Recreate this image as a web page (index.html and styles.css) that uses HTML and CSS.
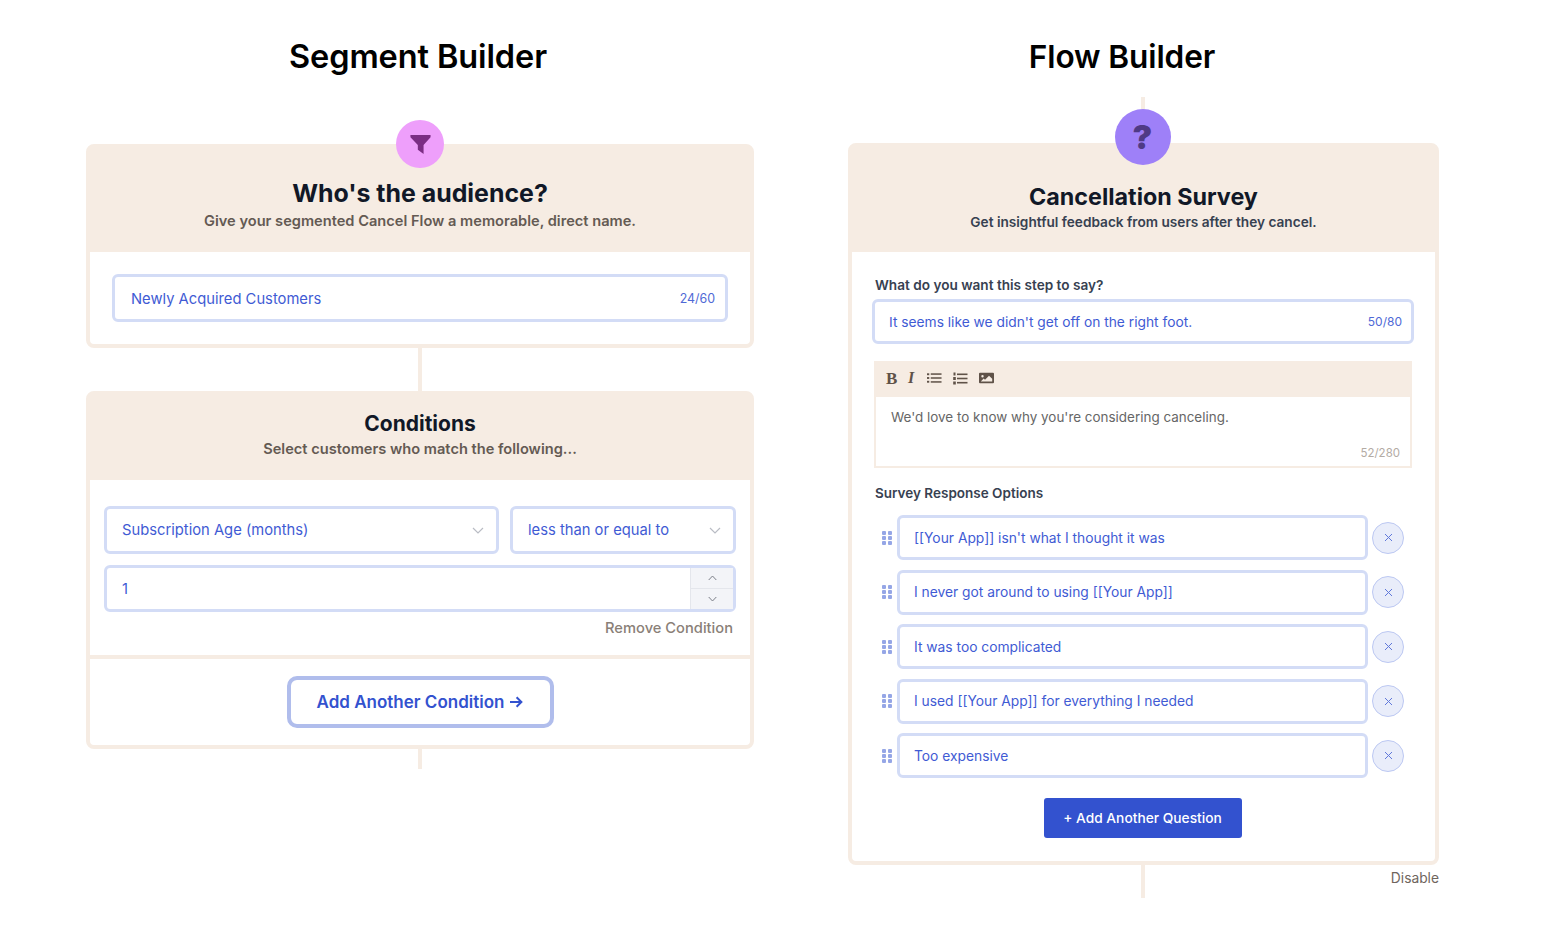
FILE: index.html
```html
<!DOCTYPE html>
<html lang="en">
<head>
<meta charset="utf-8">
<title>Builders</title>
<link rel="stylesheet" href="styles.css">
</head>
<body>
<main class="page">
  <section class="col col-left">
    <h1 class="page-title title-left">Segment Builder</h1>
    <div class="card card-audience">
      <div class="badge badge-pink">
        <svg width="23" height="23" viewBox="0 0 24 24"><path d="M1.500 2h21v2.500L15.200 12.600V22l-6-4.600v-4.800L1.500 4.500z" fill="#7b2d84"/></svg>
      </div>
      <header class="card-head head-audience">
        <h2 class="head-xl">Who's the audience?</h2>
        <p class="sub sub-brown">Give your segmented Cancel Flow a memorable, direct name.</p>
      </header>
      <div class="audience-body">
        <div class="field field-name"><span>Newly Acquired Customers</span><small class="count">24/60</small></div>
      </div>
    </div>
    <div class="line line-mid"></div>
    <div class="card">
      <header class="card-head head-conditions">
        <h2 class="head-md">Conditions</h2>
        <p class="sub sub-brown">Select customers who match the following...</p>
      </header>
      <div class="conditions-body">
        <div class="select-row">
          <div class="field field-select grow"><span>Subscription Age (months)</span>
            <svg class="chev" width="12" height="7" viewBox="0 0 12 7"><path d="M1 1l5 5 5-5" fill="none" stroke="#b9bcc4" stroke-width="1.200"/></svg></div>
          <div class="field field-select op"><span>less than or equal to</span>
            <svg class="chev" width="12" height="7" viewBox="0 0 12 7"><path d="M1 1l5 5 5-5" fill="none" stroke="#b9bcc4" stroke-width="1.200"/></svg></div>
        </div>
        <div class="field field-number"><span class="num">1</span>
          <div class="stepper">
            <div class="step"><svg width="9" height="6" viewBox="0 0 9 6"><path d="M.7 5L4.500 1l3.800 4" fill="none" stroke="#7b7f88" stroke-width="1"/></svg></div>
            <div class="step step-down"><svg width="9" height="6" viewBox="0 0 9 6"><path d="M.7 1l3.800 4 3.800-4" fill="none" stroke="#7b7f88" stroke-width="1"/></svg></div>
          </div>
        </div>
        <div class="remove">Remove Condition</div>
      </div>
      <div class="add-wrap">
        <button class="btn-outline">Add Another Condition <svg width="14" height="12" viewBox="0 0 14 12"><path d="M1 6h11.200M7.600 1.200L12.400 6l-4.800 4.800" fill="none" stroke="#3352cf" stroke-width="2"/></svg></button>
      </div>
    </div>
    <div class="line line-end"></div>
  </section>

  <section class="col col-right">
    <h1 class="page-title title-right">Flow Builder</h1>
    <div class="line line-top"></div>
    <div class="card card-survey">
      <div class="badge badge-purple">?</div>
      <header class="card-head head-survey">
        <h2 class="head-lg">Cancellation Survey</h2>
        <p class="sub sub-dark">Get insightful feedback from users after they cancel.</p>
      </header>
      <div class="survey-body">
        <label class="label label-step">What do you want this step to say?</label>
        <div class="field field-step"><span>It seems like we didn't get off on the right foot.</span><small class="count">50/80</small></div>
        <div class="editor">
          <div class="toolbar">
            <b class="tool-b">B</b>
            <i class="tool-i">I</i>
            <svg width="15" height="12" viewBox="0 0 16 12"><g fill="#5f5248"><rect x="0" y="1" width="2.400" height="2"/><rect x="0" y="5" width="2.400" height="2"/><rect x="0" y="9" width="2.400" height="2"/><rect x="4" y="1" width="11.500" height="1.600"/><rect x="4" y="5.200" width="11.500" height="1.600"/><rect x="4" y="9.400" width="11.500" height="1.600"/></g></svg>
            <svg width="15" height="13" viewBox="0 0 15 13"><g fill="#5f5248"><rect x=".5" y=".5" width="2" height="3"/><rect x=".2" y="5" width="2.600" height="3"/><rect x=".2" y="9.500" width="2.600" height="3"/><rect x="4" y="1.500" width="10.500" height="1.600"/><rect x="4" y="5.700" width="10.500" height="1.600"/><rect x="4" y="9.900" width="10.500" height="1.600"/></g></svg>
            <svg width="15" height="12" viewBox="0 0 15 12"><path fill-rule="evenodd" d="M1 .8h13a1 1 0 0 1 1 1v8.400a1 1 0 0 1-1 1H1a1 1 0 0 1-1-1V1.800a1 1 0 0 1 1-1zM3.500 3a1.200 1.200 0 1 0 0 2.400 1.200 1.200 0 0 0 0-2.400zM1.800 9.500h11.400V6.800L10 3.800 6 7.800 4.700 6.600z" fill="#5f5248"/></svg>
          </div>
          <div class="editor-text">We'd love to know why you're considering canceling.<small class="editor-count">52/280</small></div>
        </div>
        <label class="label label-options">Survey Response Options</label>
        <ul class="options">
          <li class="option"><span class="grip"><i></i><i></i><i></i><i></i><i></i><i></i></span><div class="field field-option"><span>[[Your App]] isn't what I thought it was</span></div><span class="close"><svg width="9" height="9" viewBox="0 0 9 9"><path d="M1 1l7 7M8 1L1 8" stroke="#6078da" stroke-width="1"/></svg></span></li>
          <li class="option"><span class="grip"><i></i><i></i><i></i><i></i><i></i><i></i></span><div class="field field-option"><span>I never got around to using [[Your App]]</span></div><span class="close"><svg width="9" height="9" viewBox="0 0 9 9"><path d="M1 1l7 7M8 1L1 8" stroke="#6078da" stroke-width="1"/></svg></span></li>
          <li class="option"><span class="grip"><i></i><i></i><i></i><i></i><i></i><i></i></span><div class="field field-option"><span>It was too complicated</span></div><span class="close"><svg width="9" height="9" viewBox="0 0 9 9"><path d="M1 1l7 7M8 1L1 8" stroke="#6078da" stroke-width="1"/></svg></span></li>
          <li class="option"><span class="grip"><i></i><i></i><i></i><i></i><i></i><i></i></span><div class="field field-option"><span>I used [[Your App]] for everything I needed</span></div><span class="close"><svg width="9" height="9" viewBox="0 0 9 9"><path d="M1 1l7 7M8 1L1 8" stroke="#6078da" stroke-width="1"/></svg></span></li>
          <li class="option"><span class="grip"><i></i><i></i><i></i><i></i><i></i><i></i></span><div class="field field-option"><span>Too expensive</span></div><span class="close"><svg width="9" height="9" viewBox="0 0 9 9"><path d="M1 1l7 7M8 1L1 8" stroke="#6078da" stroke-width="1"/></svg></span></li>
        </ul>
        <div class="question-wrap"><button class="btn-solid">+ Add Another Question</button></div>
      </div>
    </div>
    <div class="foot-row">
      <div class="line line-bottom"></div>
      <div class="disable">Disable</div>
    </div>
  </section>
</main>
</body>
</html>
```

FILE: styles.css
```css
* { box-sizing: border-box; }
html, body { margin: 0; padding: 0; background: #fff; }
body { font-family: Inter, "Liberation Sans", sans-serif; color: #111827; }
h1, h2, p, ul { margin: 0; padding: 0; }
ul { list-style: none; }

.page { display: flex; height: 939px; padding-left: 86px; gap: 94px; overflow: hidden; }
.col { display: flex; flex-direction: column; }
.col-left { width: 668px; }
.col-right { width: 591px; }

.page-title { height: 97px; padding-top: 36px; font-size: 32.500px; line-height: 42px; font-weight: 600; color: #000; text-align: center; letter-spacing: -.1px; }
.title-left { padding-right: 4px; margin-bottom: 47px; }
.title-right { padding-right: 43px; font-size: 31.600px; }

.line { width: 4px; background: #f6ece3; align-self: center; }
.line-mid { height: 43px; }
.line-end { height: 20px; }
.line-top { height: 46px; margin-right: 2px; }
.line-bottom { height: 33px; margin-right: 2px; }

.card { position: relative; border: 4px solid #f6ece3; border-radius: 8px; background: #fff; }
.card-head { background: #f6ece3; text-align: center; }
.head-audience { height: 104px; padding-top: 29px; }
.head-conditions { height: 85px; padding-top: 15px; }
.head-survey { height: 105px; padding-top: 35px; }

.badge { position: absolute; left: 50%; border-radius: 50%; display: flex; align-items: center; justify-content: center; }
.badge-pink { top: -28px; width: 48px; height: 48px; margin-left: -24px; background: #ee9ffb; z-index: 1; }
.badge-purple { top: -38px; width: 56px; height: 56px; margin-left: -29px; background: #9e80f8; color: #4f3a85; font-size: 33px; font-weight: 900; line-height: 56px; z-index: 1; }

.head-xl { font-size: 24.900px; line-height: 32px; font-weight: 700; color: #111827; }
.head-lg { font-size: 23.300px; line-height: 30px; font-weight: 700; color: #111827; }
.head-md { font-size: 21px; line-height: 27px; font-weight: 700; color: #111827; }
.sub { font-weight: 600; }
.sub-brown { font-size: 14.640px; line-height: 20px; color: #645a53; margin-top: 2px; }
.sub-dark { font-size: 13.650px; line-height: 20px; color: #374151; margin-top: 0; }

.field { display: flex; align-items: center; justify-content: space-between; border: 3px solid #d3dcf6; border-radius: 6px; background: #fff; color: #3f5bd4; font-size: 14.750px; font-weight: 400; }
.count { font-size: 12.400px; color: #4f69d6; }

.audience-body { padding: 22px 22px 22px; }
.field-name { height: 48px; padding: 1px 10px 0 16px; }

.conditions-body { padding: 26px 14px 18px; border-bottom: 4px solid #f6ece3; }
.select-row { display: flex; gap: 11px; margin-bottom: 11px; }
.field-select { height: 48px; padding: 0 12px 0 15px; }
.grow { flex: 1; }
.op { width: 226px; }
.field-number { height: 47px; padding: 0 0 0 15px; }
.num { color: #3f5bd4; }
.stepper { width: 43px; height: 41px; background: #f3f4f8; border-left: 1px solid #e4e6ec; display: flex; flex-direction: column; }
.step { flex: 1; display: flex; align-items: center; justify-content: center; }
.step-down { border-top: 1px solid #e4e6ec; }
.remove { margin-top: 7px; padding-right: 3px; text-align: right; font-size: 14.700px; line-height: 18px; font-weight: 500; color: #8a8077; }

.add-wrap { display: flex; justify-content: center; padding: 17px 0 17px; }
.btn-outline { display: flex; align-items: center; justify-content: center; gap: 5px; width: 267px; height: 52px; border: 4px solid #b0bdec; border-radius: 10px; background: #fff; color: #3352cf; font-family: inherit; font-size: 17px; font-weight: 600; }

.survey-body { padding: 23px 23px 23px 23px; }
.label { display: block; font-size: 13.500px; line-height: 20px; font-weight: 600; color: #374151; }
.label-step { font-size: 13.600px; }
.field-step { height: 45px; margin: 4px -2px 0 -3px; padding: 0 9px 0 14px; font-size: 13.770px; }
.field-step .count { font-size: 12px; }
.editor { margin: 17px 0 0 -1px; border: 2px solid #f6ece3; border-top: 0; }
.toolbar { height: 36px; background: #f6ece3; margin: 0 -2px; display: flex; align-items: center; gap: 11px; padding: 0 0 2px 12px; color: #5f5248; }
.tool-b { font: 700 17px/1 "Liberation Serif", serif; width: 11px; }
.tool-i { font: italic 700 16px/1 "Liberation Serif", serif; width: 8px; }
.editor-text { position: relative; height: 69px; padding: 12px 15px; font-size: 13.450px; line-height: 17px; color: #666; }
.editor-count { position: absolute; right: 10px; bottom: 6px; font-size: 11.500px; line-height: 14px; color: #b3aba4; }
.label-options { margin-top: 15px; }

.options { margin: 12px 8px 0 7px; display: flex; flex-direction: column; gap: 9.500px; }
.option { display: flex; align-items: center; position: relative; }
.grip { width: 11px; display: grid; grid-template-columns: 4px 4px; grid-auto-rows: 4px; gap: 1px 2px; margin-right: 4px; }
.grip i { background: #95a6e6; border-radius: 1px; }
.field-option { flex: 1; height: 45px; margin-right: 4px; padding: 0 14px; font-size: 13.800px; }
.close { width: 32px; height: 32px; border: 1px solid #bcc8f2; border-radius: 50%; background: #e9edfa; display: flex; align-items: center; justify-content: center; }
.question-wrap { display: flex; justify-content: center; margin-top: 20px; padding-right: 2px; }
.btn-solid { width: 198px; height: 40px; border: 0; border-radius: 3px; background: #3352cf; color: #fff; font-family: inherit; font-size: 13.750px; font-weight: 500; }

.foot-row { position: relative; display: flex; justify-content: center; }
.disable { position: absolute; right: 0; top: 4px; font-size: 13.800px; line-height: 18px; color: #6f655d; }
```
